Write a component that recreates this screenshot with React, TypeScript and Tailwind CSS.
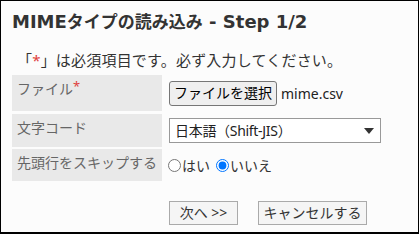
import React from 'react';

const Label: React.FC<{ children: React.ReactNode; h: string }> = ({ children, h }) => (
  <div className={`w-[150px] shrink-0 bg-[#e9e9e9] pl-[5px] pt-[4px] text-[14px] leading-[20px] text-[#666] ${h}`}>
    {children}
  </div>
);

const App: React.FC = () => {
  return (
    <div className="w-[419px] h-[234px] border border-b-2 border-black bg-[#fcfcfc] text-[#333] flex flex-col font-['Noto_Sans','Noto_Sans_CJK_JP',sans-serif]">
      {/* タイトル */}
      <h1 className="pl-[11px] pt-[8px] text-[18px] leading-[26px] font-bold text-[#333] font-['DejaVu_Sans','Noto_Sans_CJK_JP',sans-serif]">
        MIME<span className="text-[17px]">タイプの読み込み</span> - Step 1/2
      </h1>

      {/* 必須の説明 */}
      <p className="pl-[16px] mt-[15px] text-[15px] leading-[20px] tracking-[0.2px] text-[#333]">
        「<span className="text-[#e0403c]">*</span>」は必須項目です。必ず入力してください。
      </p>

      {/* フォーム */}
      <div className="ml-[11px] mt-[5px] flex flex-col gap-[2px]">
        <div className="flex h-[36px] gap-[3px]">
          <Label h="h-[36px]">
            ファイル<span className="text-[#e0403c] align-top text-[13px] leading-[14px]">*</span>
          </Label>
          <div className="flex items-center pl-[4px] gap-[4px]">
            <button className="h-[25px] px-[4px] bg-[#efefef] border border-[#767676] rounded-[3px] text-[14px] leading-[20px] text-black">
              ファイルを選択
            </button>
            <span className="text-[14px] text-[#222]">mime.csv</span>
          </div>
        </div>

        <div className="flex h-[33px] gap-[3px] mt-[1px]">
          <Label h="h-[33px]">文字コード</Label>
          <div className="flex items-center pl-[4px]">
            <div className="w-[212px] h-[25px] border border-[#999] bg-white flex items-center justify-between pl-[5px] pr-[6px] text-[14px] text-[#222]">
              <span className="tracking-[-0.3px]">日本語（Shift-JIS）</span>
              <svg width="10" height="6" viewBox="0 0 10 6">
                <path d="M0 0h10L5 6z" fill="#333" />
              </svg>
            </div>
          </div>
        </div>

        <div className="flex h-[32px] gap-[3px]">
          <Label h="h-[32px]">先頭行をスキップする</Label>
          <div className="flex items-center pl-[3px] text-[14px] text-[#333]">
            <label className="flex items-center">
              <input type="radio" name="skip" className="m-0 w-[13px] h-[13px]" />
              <span className="ml-[1px]">はい</span>
            </label>
            <label className="flex items-center ml-[6px]">
              <input type="radio" name="skip" defaultChecked className="m-0 w-[13px] h-[13px]" />
              <span className="ml-[1px]">いいえ</span>
            </label>
          </div>
        </div>
      </div>

      {/* ボタン */}
      <div className="flex gap-[20px] ml-[168px] mt-[20px]">
        <button className="w-[69px] h-[24px] border border-[#aaa] bg-[#f5f5f5] text-[14px] leading-[20px] text-[#333]">
          次へ &gt;&gt;
        </button>
        <button className="w-[109px] h-[24px] border border-[#aaa] bg-[#f5f5f5] text-[14px] leading-[20px] text-[#333]">
          キャンセルする
        </button>
      </div>
    </div>
  );
};

export default App;
